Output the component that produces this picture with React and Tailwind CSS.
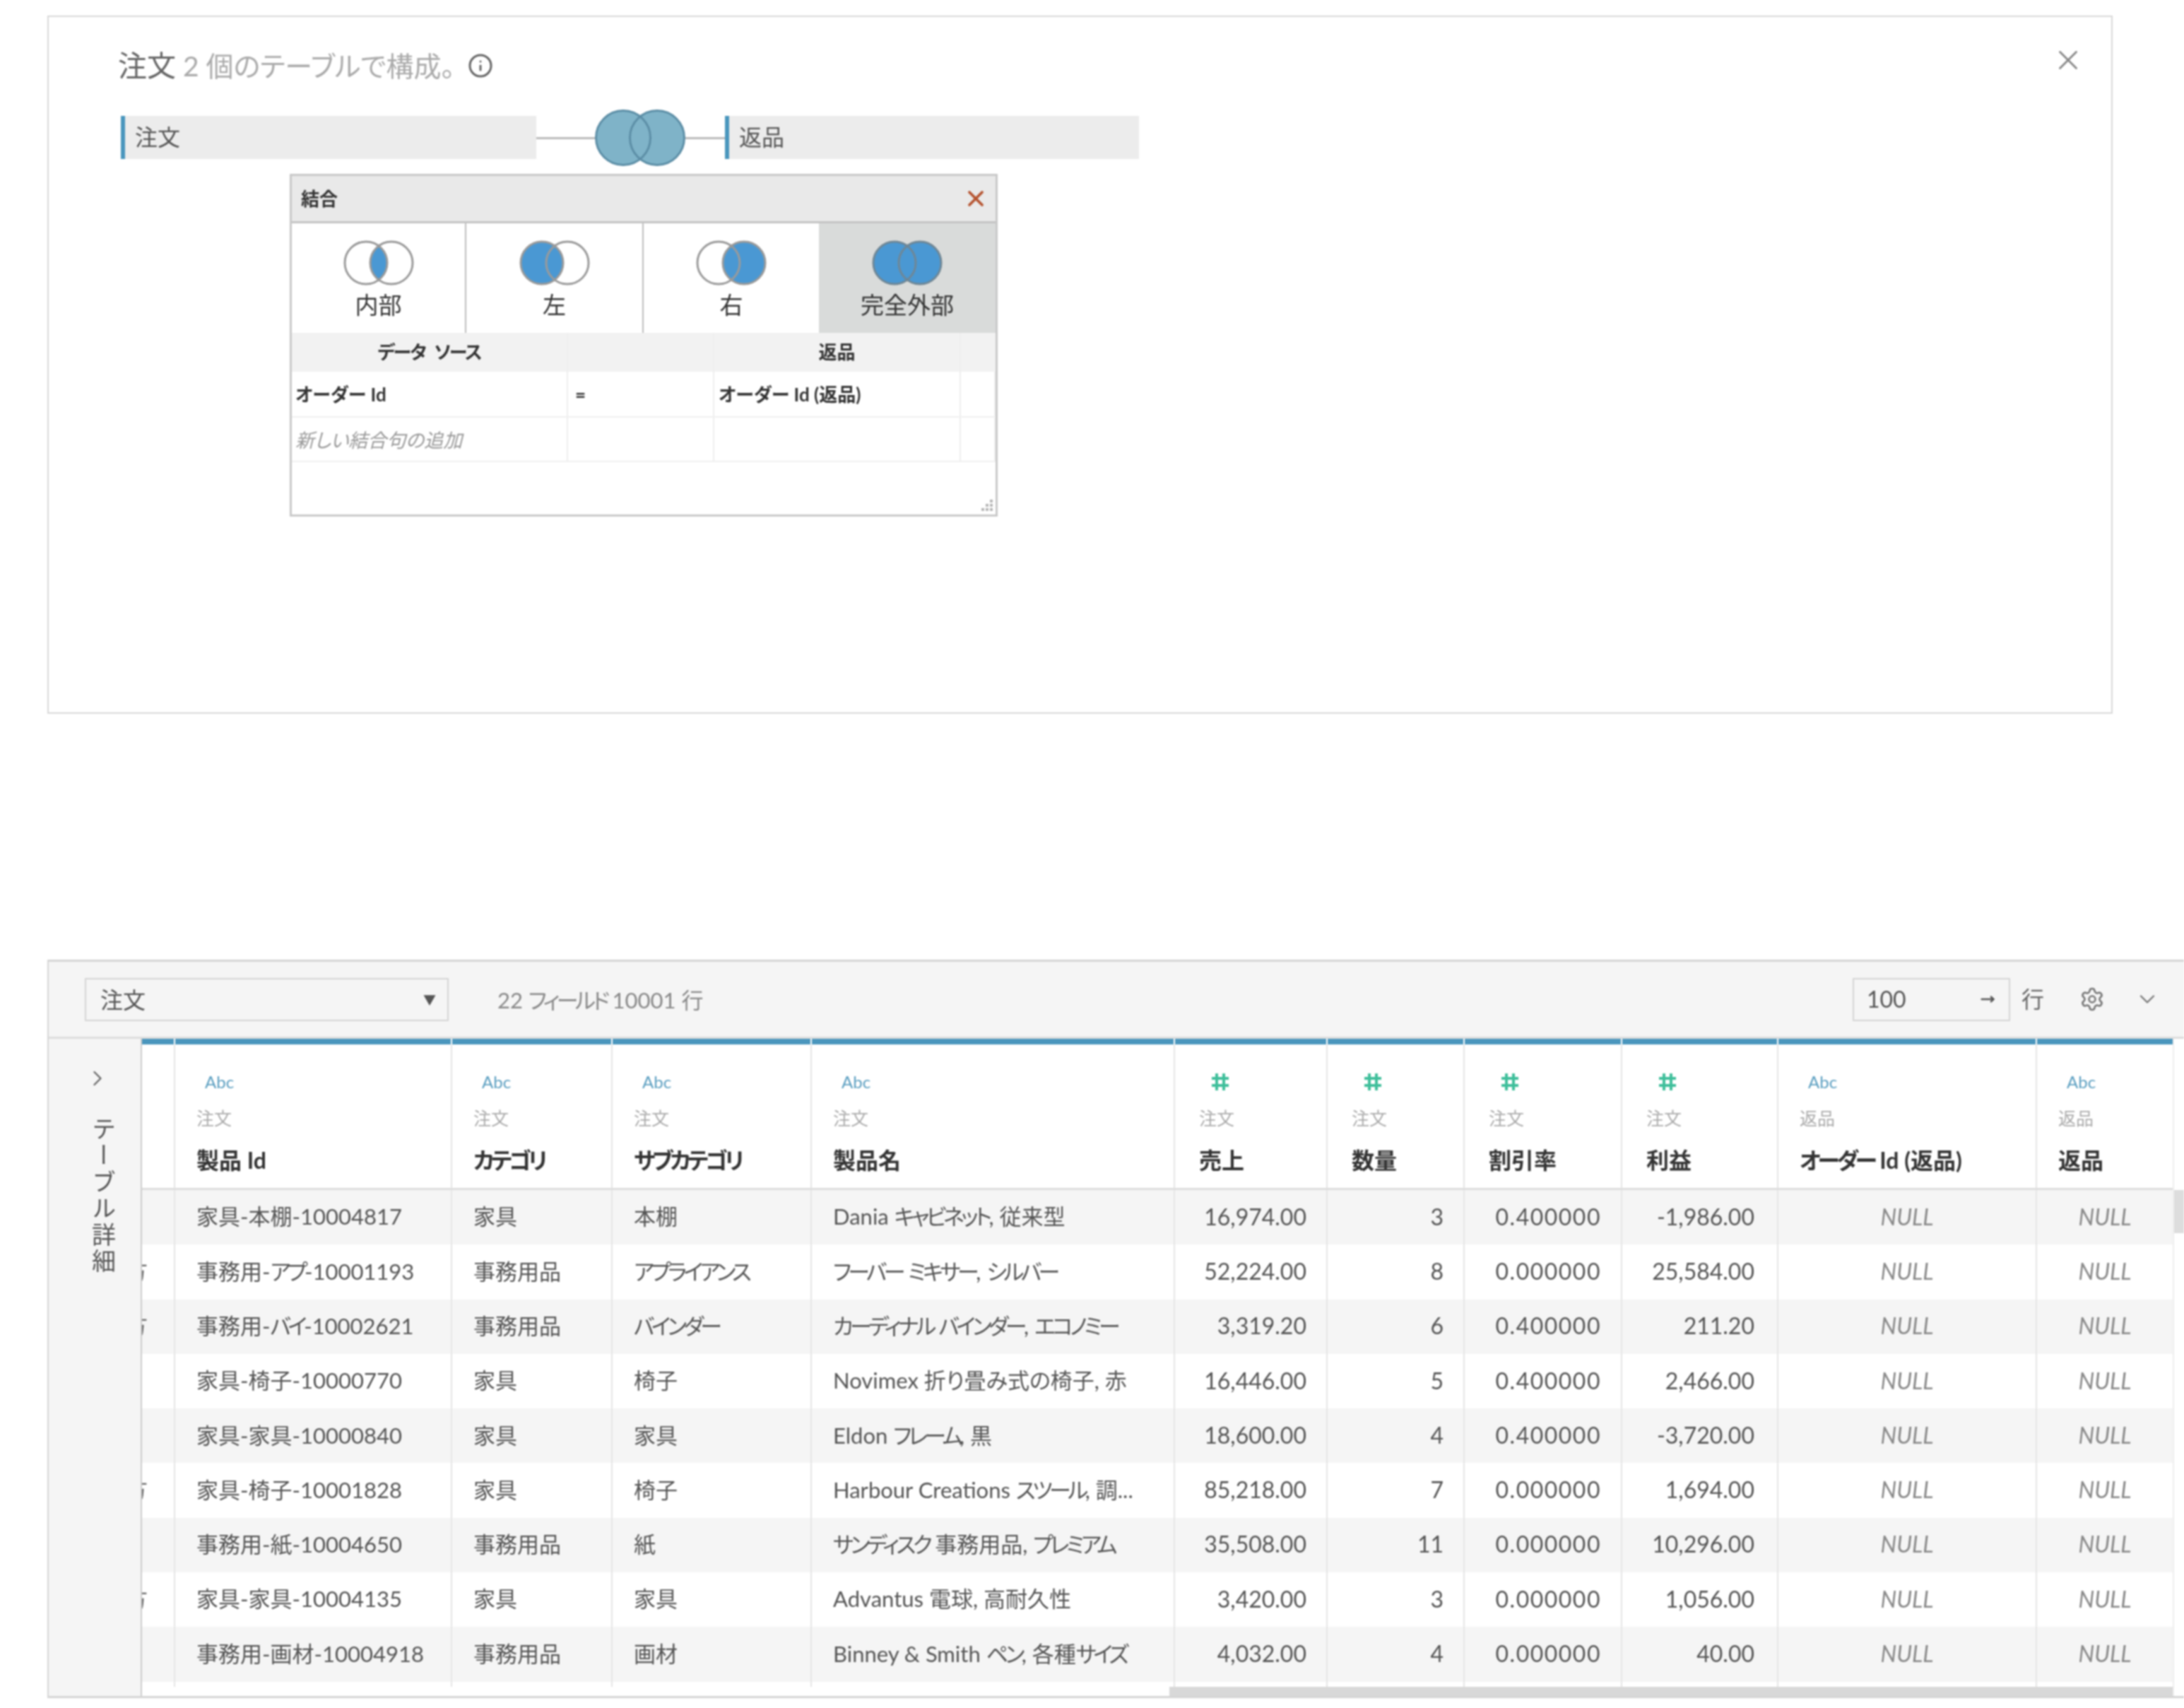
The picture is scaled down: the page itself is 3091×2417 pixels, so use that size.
import { ChevronDown, ChevronRight, Info, MoveRight, Settings, X } from "lucide-react"

const font = "font-['Lato','Noto_Sans_CJK_JP',sans-serif] [font-feature-settings:'palt']"
const gridCols = "grid grid-cols-[47px_392px_227px_282px_514px_216px_194px_223px_221px_366px_194px]"

const columns = [
    { name: "製品 Id", table: "注文", type: "abc" },
    { name: "カテゴリ", table: "注文", type: "abc" },
    { name: "サブカテゴリ", table: "注文", type: "abc" },
    { name: "製品名", table: "注文", type: "abc" },
    { name: "売上", table: "注文", type: "num" },
    { name: "数量", table: "注文", type: "num" },
    { name: "割引率", table: "注文", type: "num" },
    { name: "利益", table: "注文", type: "num" },
    { name: "オーダー Id (返品)", table: "返品", type: "abc" },
    { name: "返品", table: "返品", type: "abc" },
]

const rows = [
    { cut: false, id: "家具-本棚-10004817", cat: "家具", sub: "本棚", prod: "Dania キャビネット, 従来型", sales: "16,974.00", qty: "3", disc: "0.400000", profit: "-1,986.00" },
    { cut: true, id: "事務用-アプ-10001193", cat: "事務用品", sub: "アプライアンス", prod: "フーバー ミキサー, シルバー", sales: "52,224.00", qty: "8", disc: "0.000000", profit: "25,584.00" },
    { cut: true, id: "事務用-バイ-10002621", cat: "事務用品", sub: "バインダー", prod: "カーディナル バインダー, エコノミー", sales: "3,319.20", qty: "6", disc: "0.400000", profit: "211.20" },
    { cut: false, id: "家具-椅子-10000770", cat: "家具", sub: "椅子", prod: "Novimex 折り畳み式の椅子, 赤", sales: "16,446.00", qty: "5", disc: "0.400000", profit: "2,466.00" },
    { cut: false, id: "家具-家具-10000840", cat: "家具", sub: "家具", prod: "Eldon フレーム, 黒", sales: "18,600.00", qty: "4", disc: "0.400000", profit: "-3,720.00" },
    { cut: true, id: "家具-椅子-10001828", cat: "家具", sub: "椅子", prod: "Harbour Creations スツール, 調...", sales: "85,218.00", qty: "7", disc: "0.000000", profit: "1,694.00" },
    { cut: false, id: "事務用-紙-10004650", cat: "事務用品", sub: "紙", prod: "サンディスク 事務用品, プレミアム", sales: "35,508.00", qty: "11", disc: "0.000000", profit: "10,296.00" },
    { cut: true, id: "家具-家具-10004135", cat: "家具", sub: "家具", prod: "Advantus 電球, 高耐久性", sales: "3,420.00", qty: "3", disc: "0.000000", profit: "1,056.00" },
    { cut: false, id: "事務用-画材-10004918", cat: "事務用品", sub: "画材", prod: "Binney & Smith ペン, 各種サイズ", sales: "4,032.00", qty: "4", disc: "0.000000", profit: "40.00" },
]

// the screenshot's kana are much narrower than Noto's, so squeeze only those runs
function Kana({ text, small }) {
    return text.split(/([ァ-ヶー]+)/).map((part, i) =>
        i % 2 === 1 ? (
            <span key={i} className={small ? "tracking-[-2px]" : "tracking-[-4.5px]"}>{part}</span>
        ) : (
            part
        )
    )
}

function JoinVenn({ kind, id }) {
    const fill = "#4a98d3"
    const stroke = kind === "full" ? "#6f8796" : "#9a9a9a"
    return (
        <svg width="100" height="66" viewBox="0 0 100 66">
            <defs>
                <clipPath id={id}>
                    <circle cx="68" cy="33" r="30" />
                </clipPath>
            </defs>
            {(kind === "left" || kind === "full") && <circle cx="32" cy="33" r="30" fill={fill} />}
            {(kind === "right" || kind === "full") && <circle cx="68" cy="33" r="30" fill={fill} />}
            {kind === "inner" && <circle cx="32" cy="33" r="30" fill={fill} clipPath={`url(#${id})`} />}
            <circle cx="32" cy="33" r="30" fill="none" stroke={stroke} strokeWidth="3" />
            <circle cx="68" cy="33" r="30" fill="none" stroke={stroke} strokeWidth="3" />
        </svg>
    )
}

function JoinDialog() {
    const types = [
        { label: "内部", kind: "inner", cls: "w-[247px] border-r-2 border-[#bdbdbd]" },
        { label: "左", kind: "left", cls: "w-[251px] border-r-2 border-[#bdbdbd]" },
        { label: "右", kind: "right", cls: "w-[248px]" },
        { label: "完全外部", kind: "full", cls: "flex-1 bg-[#d9dbda]" },
    ]
    const clauseCols = "grid grid-cols-[391px_207px_349px_1fr]"
    const cell = "border-r-2 border-[#eeeeee] flex items-center"

    return (
        <div className="w-[1002px] h-[485px] ml-[239px] mt-[12px] border-[3px] border-[#c9c9c9] flex flex-col bg-white relative">
            <div className="h-[67px] bg-[#e9e9e9] border-b-[3px] border-[#c4c4c4] flex items-center justify-between pl-[13px] pr-[10px]">
                <span className="text-[26px] font-bold text-[#333]">結合</span>
                <X size={36} strokeWidth={2.5} className="text-[#b5532f]" />
            </div>
            <div className="flex h-[155px]">
                {types.map((t) => (
                    <div key={t.kind} className={`${t.cls} flex flex-col items-center pt-[23px]`}>
                        <JoinVenn kind={t.kind} id={`clip-${t.kind}`} />
                        <span className="text-[33px] leading-[40px] mt-[6px] text-[#333]">{t.label}</span>
                    </div>
                ))}
            </div>
            <div className={`${clauseCols} h-[55px] bg-[#f2f2f2] text-[26px] font-bold text-[#333]`}>
                <div className={`${cell} justify-center`}><Kana text={"データ\u00a0\u00a0ソース"} small /></div>
                <div className={cell}></div>
                <div className={`${cell} justify-center`}>返品</div>
                <div></div>
            </div>
            <div className={`${clauseCols} h-[65px] border-b-2 border-[#f0f0f0] text-[26px] font-bold text-[#333]`}>
                <div className={`${cell} pl-[5px] pt-[2px]`}>オーダー Id</div>
                <div className={`${cell} pl-[10px] pt-[2px]`}>=</div>
                <div className={`${cell} pl-[6px] pt-[2px]`}>オーダー Id (返品)</div>
                <div className={cell}></div>
            </div>
            <div className={`${clauseCols} h-[63px] border-b-2 border-[#f0f0f0] text-[27px] italic text-[#999]`}>
                <div className={`${cell} pl-[5px] pt-[4px]`}>新しい結合句の追加</div>
                <div className={cell}></div>
                <div className={cell}></div>
                <div className={cell}></div>
            </div>
            <svg width="22" height="22" viewBox="0 0 22 22" className="absolute right-[2px] bottom-[2px]">
                <g fill="#b5b5b5">
                    <rect x="16" y="3" width="4" height="4" />
                    <rect x="10" y="9" width="4" height="4" />
                    <rect x="16" y="9" width="4" height="4" />
                    <rect x="4" y="15" width="4" height="4" />
                    <rect x="10" y="15" width="4" height="4" />
                    <rect x="16" y="15" width="4" height="4" />
                </g>
            </svg>
        </div>
    )
}

function TopPanel() {
    return (
        <div className="w-[2923px] h-[988px] border-2 border-[#d8d8d8] pl-[102px] pr-[38px] pt-[45px]">
            <div className="flex items-center justify-between h-[48px] -ml-[4px]">
                <div className="flex items-center">
                    <span className="text-[41px] text-[#666]">注文</span>
                    <span className="text-[39px] text-[#aaaaaa] ml-[10px]">2 個のテーブルで構成。</span>
                    <Info size={36} strokeWidth={2} className="text-[#666] ml-[18px]" />
                </div>
                <X size={46} strokeWidth={1.5} className="text-[#888] -translate-y-2" />
            </div>
            <div className="flex items-center h-[80px] mt-[37px]">
                <div className="w-[588px] h-[61px] bg-[#ececec] border-l-[6px] border-[#4a96bd] flex items-center pl-[14px] text-[32px] text-[#555]">注文</div>
                <div className="w-[83px] h-[3px] mt-[2px] bg-[#bbbbbb]"></div>
                <svg width="128" height="80" viewBox="0 0 128 80" className="mt-[2px]">
                    <circle cx="40" cy="40" r="38.5" fill="#7fb3c8" />
                    <circle cx="88" cy="40" r="38.5" fill="#7fb3c8" />
                    <circle cx="40" cy="40" r="38.5" fill="none" stroke="#5c8ea6" strokeWidth="3" />
                    <circle cx="88" cy="40" r="38.5" fill="none" stroke="#5c8ea6" strokeWidth="3" />
                </svg>
                <div className="w-[56px] h-[3px] mt-[2px] bg-[#bbbbbb]"></div>
                <div className="w-[586px] h-[61px] bg-[#ececec] border-l-[6px] border-[#4a96bd] flex items-center pl-[14px] text-[32px] text-[#555]">返品</div>
            </div>
            <JoinDialog />
        </div>
    )
}

function Toolbar() {
    return (
        <div className="h-[112px] border-t-[3px] border-b-[3px] border-t-[#d5d5d5] border-b-[#dddddd] bg-[#f5f5f5] flex items-center">
            <div className="w-[515px] h-[61px] ml-[51px] border-2 border-[#d5d5d5] flex items-center justify-between pl-[20px] pr-[16px] pt-[2px] text-[32px] text-[#555]">
                <span>注文</span>
                <span className="text-[18px] text-[#555]">▼</span>
            </div>
            <span className="ml-[69px] pt-[2px] text-[31px] text-[#888]"><Kana text="22 フィールド 10001 行" /></span>
            <div className="flex-1"></div>
            <div className="w-[223px] h-[61px] border-2 border-[#d5d5d5] flex items-center justify-between pl-[18px] pr-[20px] text-[32px] text-[#555]">
                <span>100</span>
                <MoveRight size={20} strokeWidth={3} className="text-[#555]" />
            </div>
            <span className="ml-[16px] text-[32px] text-[#666]">行</span>
            <Settings size={36} strokeWidth={1.75} className="ml-[50px] text-[#777]" />
            <ChevronDown size={36} strokeWidth={1.5} className="ml-[42px] mr-[34px] text-[#777]" />
        </div>
    )
}

function HeaderCell({ col }) {
    return (
        <div className={`border-r-2 border-[#e5e5e5] pt-[38px] flex flex-col ${col.type === "num" ? "pl-[34px]" : "pl-[30px]"}`}>
            <div className="h-[30px] flex items-center">
                {col.type === "abc" ? (
                    <span className="ml-[12px] text-[24px] text-[#5a9ec0]">Abc</span>
                ) : (
                    <svg width="28" height="28" viewBox="0 0 28 28" className="ml-[16px]">
                        <path d="M9 2v24M19 2v24M2 9h24M2 19h24" stroke="#3fbf9b" strokeWidth="4" />
                    </svg>
                )}
            </div>
            <div className="h-[30px] mt-[22px] flex items-center text-[25px] text-[#aaaaaa]">{col.table}</div>
            <div className="h-[44px] mt-[22px] flex items-center text-[32px] font-bold text-[#333] whitespace-nowrap">
                <span><Kana text={col.name} /></span>
            </div>
        </div>
    )
}

function DataRow({ row, index }) {
    const base = "border-r-2 border-[#e5e5e5] flex items-center pb-[2px]"
    const text = `${base} pl-[30px] text-[31px] text-[#555] whitespace-nowrap overflow-hidden`
    const num = `${base} justify-end pr-7 text-[32px] text-[#555]`
    const nul = `${base} justify-center text-[32px] italic text-[#888]`
    return (
        <div className={`${gridCols} h-[77.3px] ${index % 2 === 0 ? "bg-[#f5f5f5]" : "bg-white"}`}>
            <div className={`${base} overflow-hidden text-[32px] text-[#666]`}>
                {row.cut && <span className="-ml-[24px]">方</span>}
            </div>
            <div className={text}><span><Kana text={row.id} /></span></div>
            <div className={text}><span><Kana text={row.cat} /></span></div>
            <div className={text}><span><Kana text={row.sub} /></span></div>
            <div className={text}><span><Kana text={row.prod} /></span></div>
            <div className={num}>{row.sales}</div>
            <div className={num}>{row.qty}</div>
            <div className={`${num} tracking-[1.5px]`}>{row.disc}</div>
            <div className={`${base} justify-end pr-8 text-[32px] text-[#555]`}>{row.profit}</div>
            <div className={nul}>NULL</div>
            <div className={nul}>NULL</div>
        </div>
    )
}

function DataGrid() {
    return (
        <div className="w-[2876px] flex flex-col border-l-2 border-[#cccccc]">
            <div className={`${gridCols} h-[8px]`}>
                <div className="bg-[#4a96bd] border-r-2 border-white"></div>
                {columns.map((c) => (
                    <div key={c.name} className="bg-[#4a96bd] border-r-2 border-white"></div>
                ))}
            </div>
            <div className={`${gridCols} h-[206px] border-b-[3px] border-[#dddddd]`}>
                <div className="border-r-2 border-[#e5e5e5]"></div>
                {columns.map((c) => (
                    <HeaderCell key={c.name} col={c} />
                ))}
            </div>
            {rows.map((r, i) => (
                <DataRow key={r.id} row={r} index={i} />
            ))}
            <div className={`${gridCols} flex-1`}>
                <div className="border-r-2 border-[#e5e5e5]"></div>
                {columns.map((c) => (
                    <div key={c.name} className="border-r-2 border-[#e5e5e5]"></div>
                ))}
            </div>
            <div className="h-[13px] pl-[1454px]">
                <div className="h-full bg-[#d8d8d8]"></div>
            </div>
        </div>
    )
}

function BottomPanel() {
    return (
        <div className="w-[3024px] h-[1045px] mt-[348px] border-l-2 border-b-[3px] border-[#d5d5d5] flex flex-col">
            <Toolbar />
            <div className="flex flex-1 min-h-0">
                <div className="w-[130px] bg-[#f5f5f5] flex flex-col items-center pt-[38px] text-[#555]">
                    <ChevronRight size={36} strokeWidth={1.5} className="text-[#666] ml-[8px]" />
                    <span className="[writing-mode:vertical-rl] text-[34px] tracking-[3.5px] mt-[36px] ml-[24px]">テーブル詳細</span>
                </div>
                <DataGrid />
                <div className="w-[16px] border-l-2 border-[#eeeeee] pt-[214px]">
                    <div className="h-[61px] bg-[#dddddd]"></div>
                </div>
            </div>
        </div>
    )
}

export default function App() {
    return (
        <div className={`w-[3091px] h-[2417px] bg-white pt-[22px] pl-[67px] overflow-hidden blur-[0.8px] ${font}`}>
            <TopPanel />
            <BottomPanel />
        </div>
    )
}
